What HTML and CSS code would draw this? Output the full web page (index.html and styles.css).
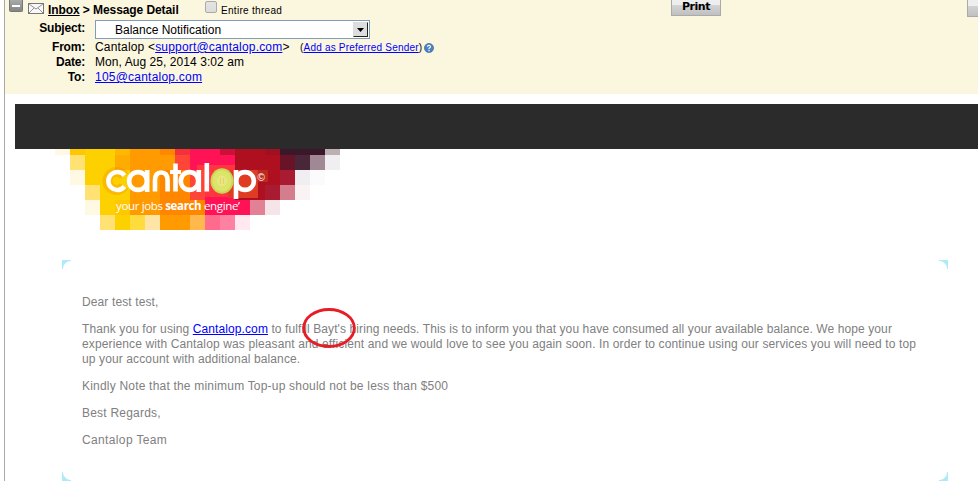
FILE: index.html
```
<!DOCTYPE html>
<html lang="en">
<head>
<meta charset="utf-8">
<title>Message Detail</title>
<link rel="stylesheet" href="styles.css">
</head>
<body>
<main class="window">
  <header class="head">
    <div class="topbar">
      <span class="collapse"></span>
      <svg class="mail" width="16" height="11" viewBox="0 0 16 11"><rect x=".5" y=".5" width="15" height="10" fill="#f8f8f8" stroke="#777"/><path d="M1 1l7 5 7-5M1 10l5-5M15 10l-5-5" fill="none" stroke="#888" stroke-width=".9"/></svg>
      <b class="crumb"><u>Inbox</u> &gt; Message Detail</b>
      <span class="check"></span>
      <span class="thread">Entire thread</span>
      <span class="print">Print</span>
      <span class="more"></span>
    </div>
    <div class="fields">
      <b>Subject:</b>
      <div class="select"><span>Balance Notification</span><i class="arrow"><svg width="7" height="4" viewBox="0 0 7 4"><path d="M0 0h7L3.500 4z"/></svg></i></div>
      <b>From:</b>
      <div class="from"><span class="addr">Cantalop &lt;<a>support@cantalop.com</a>&gt;</span><span class="pref">(<a>Add as Preferred Sender</a>)</span><svg class="help" width="10" height="10" viewBox="0 0 10 10"><circle cx="5" cy="5" r="4.600" fill="#4b82bf" stroke="#2f65a5" stroke-width=".6"/><path d="M3.300 3.700Q3.600 2.200 5.100 2.300T6.500 3.900Q6.200 4.700 5 5.300V6.200M5 7.100V8.200" fill="none" stroke="#fff" stroke-width="1.200"/></svg></div>
      <b>Date:</b>
      <div class="date">Mon, Aug 25, 2014 3:02 am</div>
      <b>To:</b>
      <div class="to"><a>105@cantalop.com</a></div>
    </div>
  </header>
  <section class="mailbody">
    <div class="banner"></div>
    <svg class="logo" width="290" height="81" viewBox="55 149 290 81">
      <g shape-rendering="crispEdges">
        <path fill="#fdd000" d="M70 149h60v66H100v-15H85v-45H70z"/>
        <path fill="#ff9a00" d="M130 149h45v66h-45z"/>
        <path fill="#ff1356" d="M190 149h45v51h15v15h-60z"/>
        <path fill="#af1020" d="M235 149h45v36h-15v15h-30z"/>
        <path fill="#ffc700" d="M70 149h15v6H70zM115 200h15v15h-15z"/>
        <path fill="#ffb700" d="M115 149h15v6h-15z"/>
        <path fill="#ffac00" d="M115 155h15v15h-15z"/>
        <path fill="#ff8700" d="M160 149h15v6h-15zM160 170h15v45h-15zM175 170h15v45h-15zM190 200h15v15h-15z"/>
        <path fill="#ff4438" d="M175 155h15v15h-15zM190 170h15v30h-15z"/>
        <path fill="#f43038" d="M175 149h15v6h-15z"/>
        <path fill="#ce1038" d="M220 149h15v6h-15z"/>
        <path fill="#a01020" d="M265 149h15v6h-15z"/>
        <path fill="#3b1829" d="M280 149h45v6h-45z"/>
        <path fill="#bdb0b2" d="M325 149h15v6h-15z"/>
        <path fill="#691329" d="M280 155h15v15h-15z"/>
        <path fill="#492638" d="M295 155h15v15h-15z"/>
        <path fill="#a08994" d="M310 155h15v15h-15z"/>
        <path fill="#f0eef0" d="M325 155h15v15h-15zM295 170h15v15h-15z"/>
        <path fill="#fcfbfc" d="M310 170h15v15h-15z"/>
        <path fill="#a81b31" d="M280 170h15v15h-15zM265 185h15v15h-15z"/>
        <path fill="#d47d8d" d="M280 185h15v15h-15z"/>
        <path fill="#f9f3f4" d="M295 185h15v15h-15z"/>
        <path fill="#e28096" d="M250 200h15v15h-15z"/>
        <path fill="#f5e5e9" d="M265 200h15v15h-15z"/>
        <path fill="#fff8e2" d="M55 149h15v6H55zM70 170h15v15H70zM85 200h15v15H85z"/>
        <path fill="#ffe273" d="M70 155h15v15H70zM85 185h15v15H85zM100 215h15v15h-15z"/>
        <path fill="#fdd000" d="M115 215h15v15h-15z"/>
        <path fill="#ffdc3d" d="M130 215h15v15h-15z"/>
        <path fill="#ffe5a5" d="M145 215h15v15h-15z"/>
        <path fill="#ff9a00" d="M160 215h30v15h-30z"/>
        <path fill="#ffb84b" d="M190 215h15v15h-15z"/>
        <path fill="#ff6a8d" d="M205 215h15v15h-15z"/>
        <path fill="#ff80a0" d="M220 215h15v15h-15z"/>
        <path fill="#ffe8ef" d="M235 215h15v15h-15z"/>
        <path fill="#ff4438" d="M197 165h38v32h-38z" opacity=".7"/>
        <path fill="#e03c24" d="M228 170h30v28h-30z"/>
        <path fill="#c83820" d="M257 170h11v12h-11z" opacity=".6"/>
      </g>
      <path d="M124 176a9 9 0 1 0 0 10" fill="none" stroke="#ee7900" stroke-opacity=".25" stroke-width="10"/>
      <g fill="none" stroke="#fff" stroke-width="4.600">
        <path d="M124.500 175.500a9 9 0 1 0 0 11"/>
        <ellipse cx="138" cy="181" rx="8.900" ry="8.900"/><path d="M147.200 170v22"/>
        <path d="M155 191.500v-11q0-8 6.300-8t6.300 8v11"/>
        <path d="M175.500 163.500v28"/><path d="M170 172h11" stroke-width="4"/>
        <ellipse cx="189.500" cy="181" rx="8.700" ry="8.900"/><path d="M198.800 170v22M206.800 163v28.500"/>
        <ellipse cx="245" cy="181" rx="8.900" ry="8.900"/><path d="M236 170v29"/>
      </g>
      <ellipse cx="222" cy="181" rx="11.500" ry="12.700" fill="#c8da54"/>
      <ellipse cx="222" cy="181" rx="9.500" ry="10.800" fill="#dbe56c"/>
      <ellipse cx="222" cy="181" rx="4.500" ry="4.800" fill="#e8e583" stroke="#f2e979"/>
      <path d="M220.500 178v6M223.500 178v6" stroke="#ddd66a"/>
      <text x="257.500" y="180.500" class="copy">©</text>
      <text x="116" y="210" class="slogan">your jobs <tspan font-weight="bold">search</tspan> engine’</text>
    </svg>
    <article class="card">
      <i class="corner tl"></i><i class="corner tr"></i><i class="corner bl"></i><i class="corner br"></i>
      <p>Dear test test,</p>
      <p><span class="l1">Thank you for using <a>Cantalop.com</a> to fulfill <span class="name">Bayt's<svg class="ring" width="54" height="40" viewBox="0 0 54 40"><ellipse cx="27" cy="20" rx="25.300" ry="18.500" fill="none" stroke="#e81c24" stroke-width="2.800"/></svg></span> hiring needs. This is to inform you that you have consumed all your available balance. We hope your</span><br><span class="l2">experience with Cantalop was pleasant and efficient and we would love to see you again soon. In order to continue using our services you will need to top</span><br><span class="l3">up your account with additional balance.</span></p>
      <p class="note">Kindly Note that the minimum Top-up should not be less than $500</p>
      <p class="regards">Best Regards,</p>
      <p class="team">Cantalop Team</p>
    </article>
  </section>
</main>
</body>
</html>
```
FILE: styles.css
```
* { box-sizing: border-box; }
body { margin: 0; background: #fff; font: 12px/15px "Liberation Sans", Arial, sans-serif; color: #000; overflow: hidden; }
a { color: #00f; text-decoration: underline; }
.window { margin-left: 4px; height: 481px; border-left: 1px solid #aaa; overflow: hidden; }
.head { height: 94px; background: #fbf6de; }
.topbar { display: flex; height: 19px; align-items: flex-start; white-space: nowrap; }
.topbar > * { flex: none; }
.collapse { width: 14px; height: 12px; margin-left: 4px; border: 1px solid #777; border-top: 0; border-radius: 0 0 2px 2px; background: linear-gradient(#fff, #fff) 2px 5px / 8px 2px no-repeat, linear-gradient(#aaa, #858585); }
.mail { margin: 3px 0 0 5px; }
.crumb { margin: 3px 0 0 4px; width: 157px; letter-spacing: -.08px; }
.check { width: 12px; height: 12px; margin-top: 1px; border: 1px solid #aaa; border-radius: 2px; background: linear-gradient(#e4e4e4, #dcdcdc); }
.thread { margin: 3px 0 0 4px; width: 450px; font-size: 10px; letter-spacing: .3px; }
.print { width: 50px; height: 16px; border: 1px solid #aaa; border-top: 0; background: linear-gradient(#eee 0 35%, #d3d3d3 36%, #c0c0c0); font: bold 11px/14px "DejaVu Sans", sans-serif; text-align: center; letter-spacing: -.5px; }
.more { width: 20px; height: 17px; margin-left: 246px; border: 1px solid #aaa; border-top: 0; background: linear-gradient(#eee 0 35%, #d3d3d3 36%, #c0c0c0); }
.fields { display: grid; grid-template-columns: 80px 1fr; grid-template-rows: 21px 15px 15px 15px; column-gap: 10px; white-space: nowrap; }
.fields b { text-align: right; line-height: 15px; letter-spacing: -.2px; }
.fields > b:first-child { padding-top: 2px; }
.select { width: 275px; height: 19px; margin-top: 1px; border: 1px solid #7f9db9; background: #fff; display: flex; justify-content: space-between; padding-left: 19px; line-height: 18px; }
.arrow { width: 15px; height: 15px; margin: 1px; border: 1px solid #222; border-top-color: #ddd; border-left-color: #ddd; background: #ddd; display: flex; align-items: center; justify-content: center; }
.from { display: flex; }
.addr { width: 205px; letter-spacing: .18px; }
.pref { width: 124px; font-size: 10px; letter-spacing: .2px; }
.date { letter-spacing: .06px; }
.to { letter-spacing: .22px; }
.help { margin-top: 3px; }
.mailbody { padding: 10px 0 0 10px; }
.banner { height: 45px; background: #2b2b2b; }
.logo { display: block; margin-left: 40px; }
.slogan { font: 11.5px "Open Sans", sans-serif; letter-spacing: -.35px; fill: #fff; }
.copy { font: 10px "Liberation Sans", sans-serif; fill: #fff; }
.card { position: relative; width: 886px; height: 221px; margin: 30px 0 0 47px; padding: 35px 20px 0; color: #808080; white-space: nowrap; letter-spacing: .12px; }
.card p { margin: 0 0 12px; }
.l1 { letter-spacing: .1px; }
.l2 { letter-spacing: .125px; }
.card .note { letter-spacing: .2px; }
.card .regards { letter-spacing: .22px; }
.card .team { letter-spacing: .36px; }
.corner { position: absolute; width: 9px; height: 9px; }
.tl { left: 0; top: 0; background: radial-gradient(circle at 100% 100%, transparent 7.500px, #aeeaf8 8.500px); }
.tr { right: 0; top: 0; background: radial-gradient(circle at 0 100%, transparent 7.500px, #aeeaf8 8.500px); }
.bl { left: 0; bottom: 0; background: radial-gradient(circle at 100% 0, transparent 7.500px, #aeeaf8 8.500px); }
.br { right: 0; bottom: 0; background: radial-gradient(circle at 0 0, transparent 7.500px, #aeeaf8 8.500px); }
.name { position: relative; }
.ring { position: absolute; left: -11px; top: -14px; }
```
